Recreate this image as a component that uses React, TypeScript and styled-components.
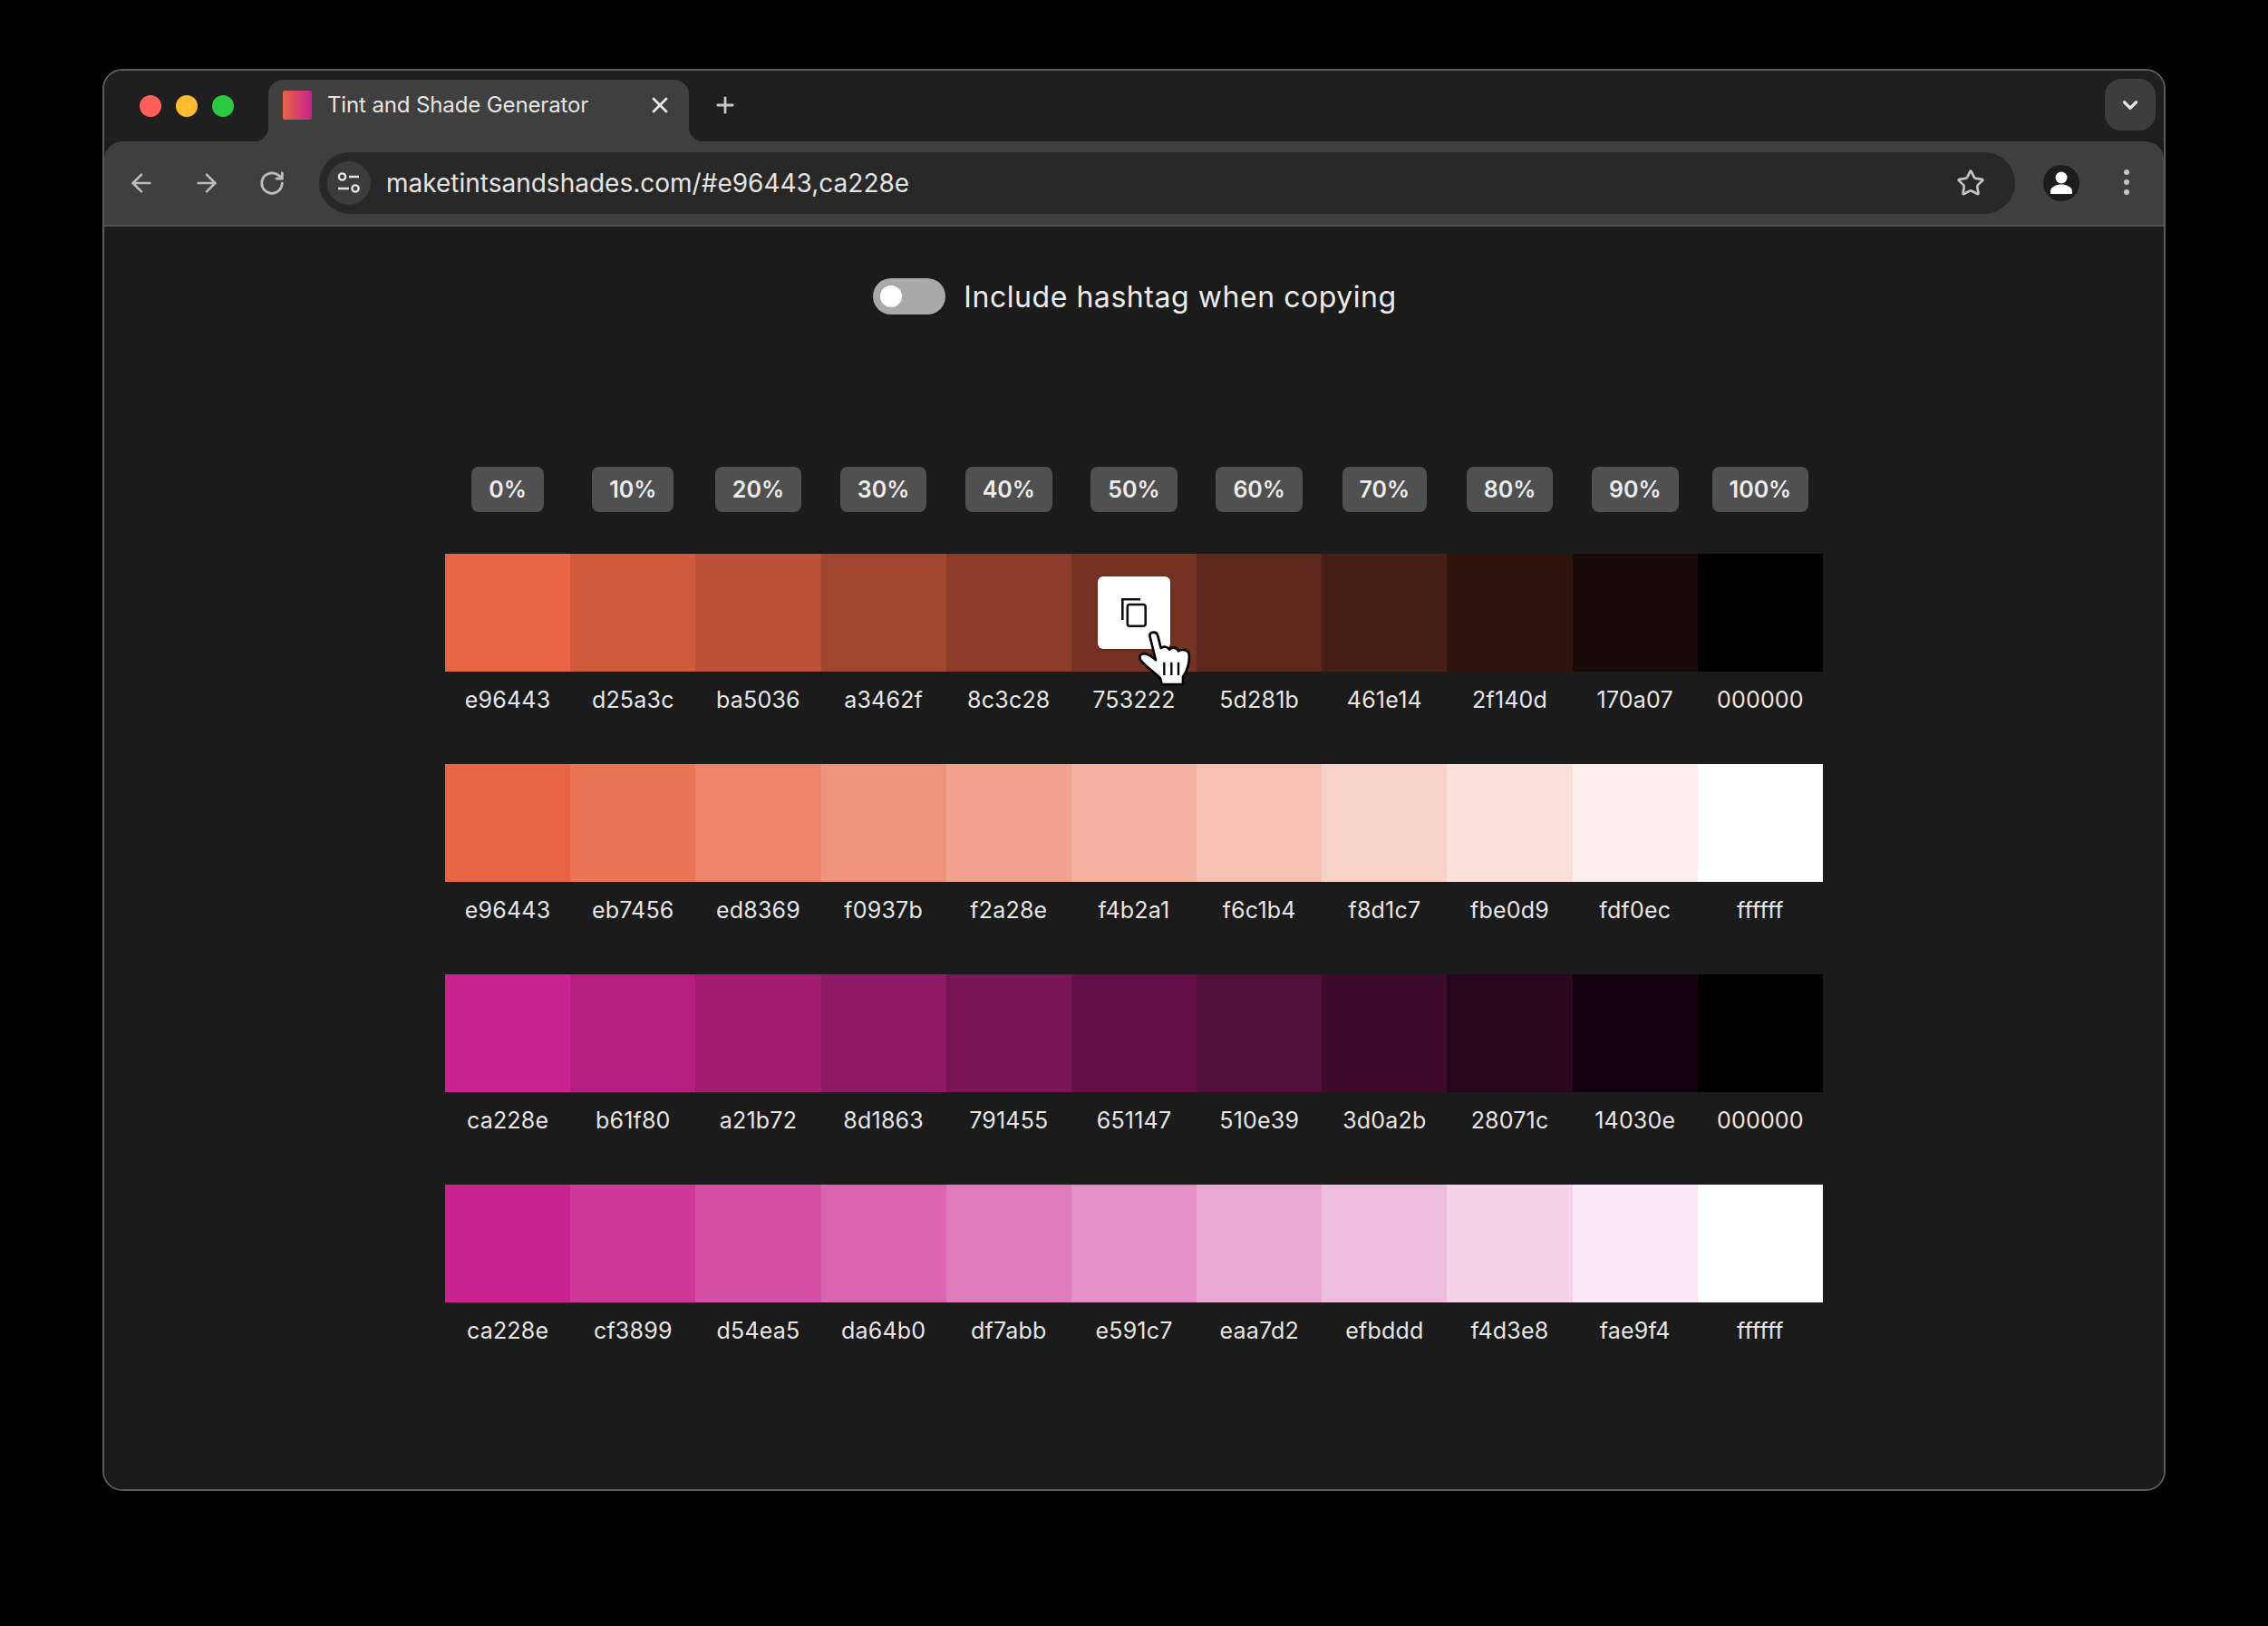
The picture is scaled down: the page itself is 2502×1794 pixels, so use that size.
import React from "react";
import styled, { createGlobalStyle } from "styled-components";
import { ArrowLeft, ArrowRight, ChevronDown, Plus, RotateCw, Star, X } from "lucide-react";

const Global = createGlobalStyle`
    html, body {
        margin: 0;
        background: #000;
    }
    * {
        box-sizing: border-box;
    }
`;

const Page = styled.div`
    width: 2502px;
    height: 1794px;
    padding: 76px 113px 149px;
    background: #000;
    overflow: hidden;
`;

const Window = styled.div`
    height: 100%;
    display: flex;
    flex-direction: column;
    background: #1b1b1b;
    border: 2px solid #5c5c5c;
    border-radius: 22px;
    overflow: hidden;
`;

const TabBar = styled.div`
    height: 78px;
    flex: none;
    display: flex;
    align-items: flex-end;
    padding: 0 9px 0 39px;
    background: #1f1f1f;
`;

const Lights = styled.div`
    display: flex;
    gap: 16px;
    align-self: flex-start;
    margin: 27px 38px 0 0;
`;

const Light = styled.span<{ $color: string }>`
    width: 24px;
    height: 24px;
    border-radius: 50%;
    background: ${(p) => p.$color};
`;

const Tab = styled.div`
    position: relative;
    width: 464px;
    height: 68px;
    display: flex;
    align-items: flex-start;
    padding: 12px 0 0 16px;
    background: #3f3f3f;
    border-radius: 16px 16px 0 0;

    &::before,
    &::after {
        content: "";
        position: absolute;
        bottom: 0;
        width: 16px;
        height: 16px;
    }
    &::before {
        left: -16px;
        background: radial-gradient(circle at 0 0, transparent 16px, #3f3f3f 16.5px);
    }
    &::after {
        right: -16px;
        background: radial-gradient(circle at 100% 0, transparent 16px, #3f3f3f 16.5px);
    }
`;

const Favicon = styled.span`
    width: 32px;
    height: 32px;
    border-radius: 2px;
    background: linear-gradient(90deg, #e96443, #ca228e);
`;

const TabTitle = styled.span`
    flex: 1;
    margin-left: 17px;
    font: 400 24px/32px Inter, sans-serif;
    letter-spacing: -0.13px;
    color: #e4e4e4;
`;

const TabClose = styled.span`
    display: flex;
    margin: 2px 18px 0 0;
    color: #e8e8e8;
`;

const NewTab = styled.span`
    display: flex;
    align-self: flex-start;
    margin: 24px 0 0 26px;
    color: #c8c8c8;
`;

const TabMenu = styled.div`
    width: 56px;
    height: 57px;
    display: flex;
    align-items: center;
    justify-content: center;
    align-self: flex-start;
    margin: 9px 0 0 auto;
    border-radius: 18px;
    background: #3d3d3d;
    color: #e4e4e4;
`;

const Toolbar = styled.div`
    height: 94px;
    flex: none;
    display: flex;
    align-items: flex-start;
    padding: 12px 36px 0 5px;
    background: #3f3f3f;
    border-bottom: 2px solid #505050;
    border-radius: 20px 20px 0 0;
`;

const NavButton = styled.span`
    width: 72px;
    height: 68px;
    display: flex;
    align-items: center;
    justify-content: center;
    color: #bcbcbc;
`;

const Omnibox = styled.div`
    flex: 1;
    height: 68px;
    display: flex;
    align-items: center;
    margin-left: 16px;
    padding: 0 33px 0 9px;
    border-radius: 34px;
    background: #282828;
`;

const SiteInfo = styled.span`
    width: 48px;
    height: 48px;
    flex: none;
    display: flex;
    align-items: center;
    justify-content: center;
    border-radius: 50%;
    background: #3c3c3c;
`;

const Url = styled.span`
    flex: 1;
    margin-left: 17px;
    font: 400 28px/34px Inter, sans-serif;
    color: #e3e3e3;
`;

const Avatar = styled.span`
    width: 40px;
    height: 40px;
    flex: none;
    margin: 14px 0 0 31px;
    border-radius: 50%;
    background: #1c1c1c;
    overflow: hidden;
`;

const Dots = styled.span`
    width: 8px;
    display: flex;
    flex-direction: column;
    gap: 5px;
    margin: 19px 0 0 49px;

    i {
        width: 6px;
        height: 6px;
        border-radius: 50%;
        background: #c4c4c4;
    }
`;

const Content = styled.main`
    flex: 1;
    display: flex;
    flex-direction: column;
    align-items: center;
    padding-top: 57px;
    background: #1b1b1b;
    font-family: Inter, "Liberation Sans", sans-serif;
`;

const ToggleRow = styled.div`
    height: 40px;
    display: flex;
    align-items: center;
    gap: 20px;
    margin: 0 0 168px 2px;
`;

const Toggle = styled.span`
    width: 80px;
    height: 40px;
    display: flex;
    align-items: center;
    padding-left: 8px;
    border-radius: 20px;
    background: #a9a9a9;

    i {
        width: 24px;
        height: 24px;
        border-radius: 50%;
        background: #fff;
    }
`;

const ToggleLabel = styled.span`
    font-size: 32px;
    font-weight: 400;
    letter-spacing: 0.55px;
    color: #ececec;
`;

const Grid = styled.div`
    width: 1520px;
    display: grid;
    grid-template-columns: repeat(11, 1fr);
`;

const PercentRow = styled(Grid)`
    justify-items: center;
    margin-bottom: 46px;
`;

const Pill = styled.span`
    height: 50px;
    padding: 0 19px;
    display: flex;
    align-items: center;
    border-radius: 8px;
    background: #505050;
    font-size: 25px;
    font-weight: 600;
    color: #ececec;
`;

const Palette = styled(Grid)`
    margin-bottom: 42px;
`;

const Cell = styled.div`
    display: flex;
    flex-direction: column;
    position: relative;
`;

const Swatch = styled.div<{ $color: string }>`
    height: 130px;
    display: flex;
    align-items: center;
    justify-content: center;
    background: ${(p) => p.$color};
`;

const Hex = styled.div`
    height: 60px;
    padding-top: 2px;
    display: flex;
    align-items: center;
    justify-content: center;
    font-size: 25px;
    font-weight: 400;
    letter-spacing: 0.2px;
    color: #e6e6e6;
`;

const CopyButton = styled.div`
    width: 80px;
    height: 80px;
    display: flex;
    align-items: center;
    justify-content: center;
    border-radius: 6px;
    background: #fff;
    box-shadow: 0 1px 4px rgba(0, 0, 0, 0.25);
`;

const Pointer = styled.svg`
    position: absolute;
    left: 68px;
    top: 79px;
    width: 70px;
    height: 70px;
`;

const percents = ["0%", "10%", "20%", "30%", "40%", "50%", "60%", "70%", "80%", "90%", "100%"];

const palettes = [
    ["e96443", "d25a3c", "ba5036", "a3462f", "8c3c28", "753222", "5d281b", "461e14", "2f140d", "170a07", "000000"],
    ["e96443", "eb7456", "ed8369", "f0937b", "f2a28e", "f4b2a1", "f6c1b4", "f8d1c7", "fbe0d9", "fdf0ec", "ffffff"],
    ["ca228e", "b61f80", "a21b72", "8d1863", "791455", "651147", "510e39", "3d0a2b", "28071c", "14030e", "000000"],
    ["ca228e", "cf3899", "d54ea5", "da64b0", "df7abb", "e591c7", "eaa7d2", "efbddd", "f4d3e8", "fae9f4", "ffffff"],
];

const CopyIcon = () => (
    <svg width="28" height="32" viewBox="0 0 28 32" fill="none" stroke="#111" strokeWidth="2.6">
        <path d="M1.3 24V1.3H21" />
        <rect x="6.8" y="7" width="19.9" height="23.7" rx="2.5" />
    </svg>
);

const HandCursor = () => (
    <Pointer viewBox="0 0 210 210">
        <path
            d="M55 35C55 20 78 18 82 35L92 75C100 68 115 70 120 80C128 70 145 72 150 85C160 78 183 80 185 95C188 120 180 150 165 170L165 195L95 195L90 175C70 155 40 135 25 115C15 100 30 90 45 95C55 97 65 105 75 115Z"
            fill="#fff"
            stroke="#000"
            strokeWidth="8"
            strokeLinejoin="round"
        />
        <path d="M103 122V165M127 122V165M150 122V165" stroke="#000" strokeWidth="7" fill="none" />
    </Pointer>
);

export default function App() {
    return (
        <Page>
            <Global />
            <Window>
                <TabBar>
                    <Lights>
                        <Light $color="#ff5f57" />
                        <Light $color="#febc2e" />
                        <Light $color="#28c840" />
                    </Lights>
                    <Tab>
                        <Favicon />
                        <TabTitle>Tint and Shade Generator</TabTitle>
                        <TabClose>
                            <X size={28} strokeWidth={2.4} />
                        </TabClose>
                    </Tab>
                    <NewTab>
                        <Plus size={28} strokeWidth={2.4} />
                    </NewTab>
                    <TabMenu>
                        <ChevronDown size={26} strokeWidth={3} />
                    </TabMenu>
                </TabBar>
                <Toolbar>
                    <NavButton>
                        <ArrowLeft size={32} strokeWidth={2} />
                    </NavButton>
                    <NavButton>
                        <ArrowRight size={32} strokeWidth={2} />
                    </NavButton>
                    <NavButton>
                        <RotateCw size={30} strokeWidth={2.2} />
                    </NavButton>
                    <Omnibox>
                        <SiteInfo>
                            <svg width="26" height="26" viewBox="0 0 26 26" fill="none" stroke="#e2e2e2" strokeWidth="2.4">
                                <circle cx="5.5" cy="6" r="3.6" />
                                <path d="M13 6h11M1 19h12" />
                                <circle cx="20" cy="19" r="3.6" />
                            </svg>
                        </SiteInfo>
                        <Url>maketintsandshades.com/#e96443,ca228e</Url>
                        <Star size={32} strokeWidth={2} color="#c4c4c4" />
                    </Omnibox>
                    <Avatar>
                        <svg width="40" height="40" viewBox="0 0 40 40" fill="#fff">
                            <circle cx="20" cy="14" r="6.5" />
                            <path d="M8 32v-3c0-5 7-7.5 12-7.5S32 24 32 29v3z" />
                        </svg>
                    </Avatar>
                    <Dots>
                        <i />
                        <i />
                        <i />
                    </Dots>
                </Toolbar>
                <Content>
                    <ToggleRow>
                        <Toggle>
                            <i />
                        </Toggle>
                        <ToggleLabel>Include hashtag when copying</ToggleLabel>
                    </ToggleRow>
                    <PercentRow>
                        {percents.map((p) => (
                            <Pill key={p}>{p}</Pill>
                        ))}
                    </PercentRow>
                    {palettes.map((colors, row) => (
                        <Palette key={row}>
                            {colors.map((color, i) => {
                                const hovered = row === 0 && i === 5;
                                return (
                                    <Cell key={color + i}>
                                        <Swatch $color={"#" + color}>
                                            {hovered && (
                                                <CopyButton>
                                                    <CopyIcon />
                                                </CopyButton>
                                            )}
                                        </Swatch>
                                        <Hex>{color}</Hex>
                                        {hovered && <HandCursor />}
                                    </Cell>
                                );
                            })}
                        </Palette>
                    ))}
                </Content>
            </Window>
        </Page>
    );
}
